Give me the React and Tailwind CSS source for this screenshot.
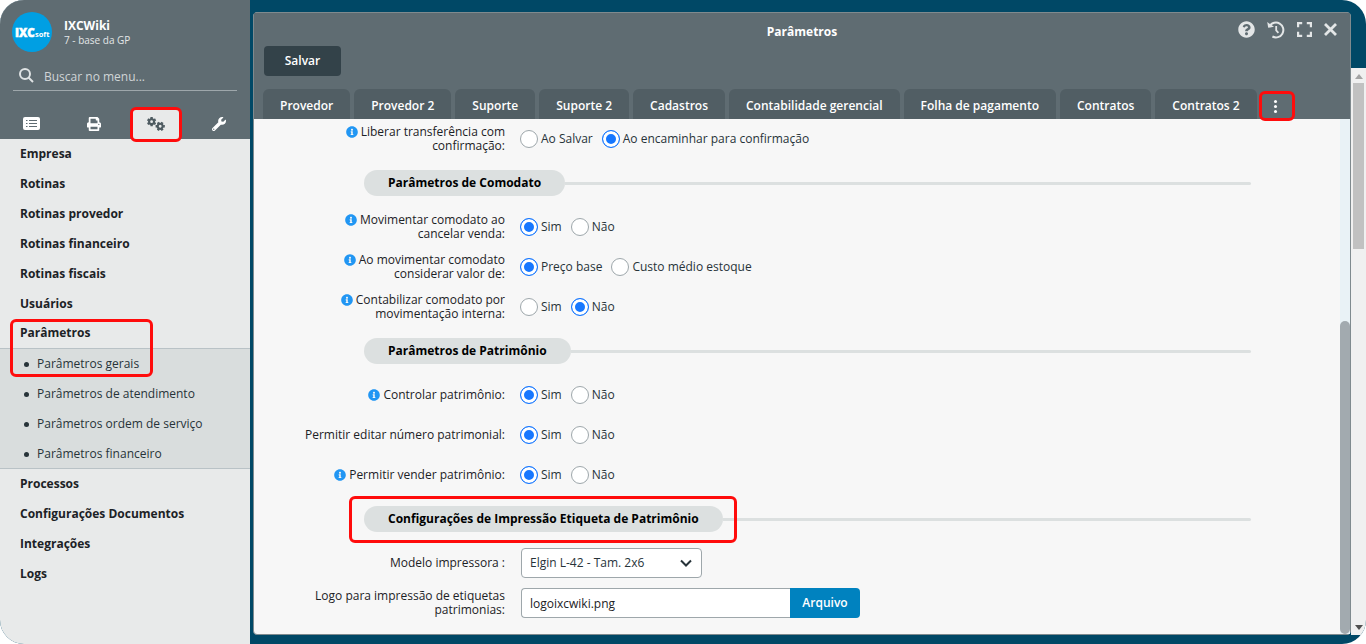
import React, { useState } from 'react';
import { FaPrint, FaWrench, FaQuestionCircle, FaInfoCircle } from 'react-icons/fa';

const menu = [
  { name: 'Empresa' },
  { name: 'Rotinas' },
  { name: 'Rotinas provedor' },
  { name: 'Rotinas financeiro' },
  { name: 'Rotinas fiscais' },
  { name: 'Usuários' },
  {
    name: 'Parâmetros',
    children: [
      'Parâmetros gerais',
      'Parâmetros de atendimento',
      'Parâmetros ordem de serviço',
      'Parâmetros financeiro',
    ],
  },
  { name: 'Processos' },
  { name: 'Configurações Documentos' },
  { name: 'Integrações' },
  { name: 'Logs' },
];

const tabs = [
  'Provedor',
  'Provedor 2',
  'Suporte',
  'Suporte 2',
  'Cadastros',
  'Contabilidade gerencial',
  'Folha de pagamento',
  'Contratos',
  'Contratos 2',
];

const ListIcon = () => (
  <svg viewBox="0 0 17 13" className="w-[17px] h-[13px]">
    <rect width="17" height="13" rx="2" fill="#fff" />
    <path d="M3 3.5h1.5M6 3.5h8M3 6.5h1.5M6 6.5h8M3 9.5h1.5M6 9.5h8" stroke="#5f6c72" strokeWidth="1.2" />
  </svg>
);

const Gear = ({ x, y, turn }) => (
  <g transform={`translate(${x} ${y}) rotate(${turn})`} fill="none" stroke="#4d5a60">
    <circle r="2.5" strokeWidth="2.2" />
    <path
      d="M0 -3V-4.6M2.6 -1.5L4 -2.3M2.6 1.5L4 2.3M0 3V4.6M-2.6 1.5L-4 2.3M-2.6 -1.5L-4 -2.3"
      strokeWidth="2.4"
    />
  </g>
);

const GearsIcon = () => (
  <svg viewBox="0 0 18 14" className="w-[18px] h-[14px]">
    <Gear x={4.6} y={4.7} turn={0} />
    <Gear x={13.2} y={9.3} turn={30} />
  </svg>
);

const HistoryIcon = () => (
  <svg viewBox="0 0 18 18" className="w-[18px] h-[18px]" fill="none" stroke="currentColor" strokeWidth="2">
    <path d="M2.6 5.2A7.4 7.4 0 1 1 5.4 15.5" />
    <path d="M9.2 5V9.4L11.4 11.8" strokeWidth="1.8" />
    <path d="M0.2 1L1.2 6.8L7 5.8Z" fill="currentColor" stroke="none" />
  </svg>
);

const ExpandIcon = () => (
  <svg viewBox="0 0 15 15" className="w-[15px] h-[15px]" fill="none" stroke="currentColor" strokeWidth="2.2">
    <path d="M1.1 5.2V1.1H5.2M9.8 1.1H13.9V5.2M13.9 9.8V13.9H9.8M5.2 13.9H1.1V9.8" />
  </svg>
);

const CloseIcon = () => (
  <svg viewBox="0 0 13 13" className="w-[13px] h-[13px]" fill="none" stroke="currentColor" strokeWidth="2.8">
    <path d="M1 1L12 12M12 1L1 12" />
  </svg>
);

const Sidebar = () => (
  <aside className="w-[250px] shrink-0 flex flex-col bg-[#e8eaea]">
    <div className="bg-[#5f6c72] flex flex-col">
      <div className="flex items-center gap-3 px-3 pt-3">
        <svg viewBox="0 0 40 40" className="w-10 h-10">
          <circle cx="20" cy="20" r="20" fill="#009fe3" />
          <text x="3" y="25" fontFamily="Open Sans" fontSize="11.5" fontWeight="800" fill="#fff" stroke="#fff" strokeWidth="0.5">IXC</text>
          <text x="23" y="25" fontFamily="Open Sans" fontSize="7.5" fontWeight="700" fill="#fff">soft</text>
        </svg>
        <div className="pt-[2px]">
          <p className="text-[12px] leading-[14px] font-bold text-white">IXCWiki</p>
          <p className="text-[10px] leading-[14px] text-[#e3e6e7]">7 - base da GP</p>
        </div>
      </div>
      <label className="mx-[13px] mt-2 h-[31px] flex items-center gap-[10px] border-b border-[#9ea7ab] pl-[6px]">
        <svg viewBox="0 0 15 15" className="w-[15px] h-[15px]" fill="none" stroke="#dfe3e4" strokeWidth="2">
          <circle cx="6" cy="6" r="5" />
          <path d="M9.5 9.5L14 14" />
        </svg>
        <input
          type="text"
          aria-label="Buscar no menu"
          placeholder="Buscar no menu..."
          className="min-w-0 flex-1 pt-1 bg-transparent text-[12px] outline-none placeholder:text-[#d0d5d7]"
        />
      </label>
      <div className="mt-[17px] grid grid-cols-4 h-[31px] text-white">
        <button aria-label="Cadastros" className="flex items-center justify-center"><ListIcon /></button>
        <button aria-label="Relatórios" className="flex items-center justify-center"><FaPrint size={14} /></button>
        <button aria-label="Sistema" className="relative flex items-center justify-center">
          <span className="absolute -top-px left-1/2 -translate-x-1/2 w-[52px] h-[35px] rounded-md border-3 border-[#ff0c0c] bg-[#e8eaea]" />
          <span className="relative"><GearsIcon /></span>
        </button>
        <button aria-label="Ferramentas" className="flex items-center justify-center"><FaWrench size={14} /></button>
      </div>
    </div>

    <nav className="text-[12px] text-[#1c2226]">
      {menu.map((item) => (
        <div key={item.name} className={item.children ? 'relative -mt-px' : ''}>
          <a href="#" className="flex items-center h-[30px] px-5 font-bold">{item.name}</a>
          {item.children && (
            <>
              <ul className="bg-[#d9dddd] border-t border-[#b9c2c6] shadow-[inset_0_-1px_0_#b9c2c6]">
                {item.children.map((child) => (
                  <li key={child}>
                    <a href="#" className="flex items-center h-[30px] pl-6 gap-2 text-[#273339]">
                      <span className="w-[5px] h-[5px] rounded-full bg-[#273339]" />
                      {child}
                    </a>
                  </li>
                ))}
              </ul>
              <span className="absolute left-[10px] top-px w-[143px] h-[58px] rounded-md border-3 border-[#ff0c0c] pointer-events-none" />
            </>
          )}
        </div>
      ))}
    </nav>
  </aside>
);

const Section = ({ title, marked }) => (
  <div className="flex items-center h-12 ml-[110px] mr-[89px]">
    <h2 className="relative h-[26px] flex items-center px-6 rounded-full bg-[#dce0e0] text-[12px] font-bold text-black">
      {title}
      {marked && (
        <span className="absolute -left-[15px] -right-[14px] -top-[10px] -bottom-[11px] rounded-md border-3 border-[#ff0c0c]" />
      )}
    </h2>
    <span className="flex-1 h-[3px] bg-[#dce0e0] rounded-r-sm" />
  </div>
);

const Row = ({ label, info, htmlFor, children }) => {
  const Label = htmlFor ? 'label' : 'span';
  return (
    <div className="flex items-center h-10 pl-[46px]">
      <Label htmlFor={htmlFor} className="w-[205px] shrink-0 text-right leading-[14px]">
        {info && <FaInfoCircle size={12} className="inline-block mr-[3px] align-[-2px] text-[#2196f3]" />}
        {label}
      </Label>
      {children}
    </div>
  );
};

const RadioRow = ({ label, info, name, options, initial }) => {
  const [value, setValue] = useState(initial);
  return (
    <Row label={label} info={info}>
      <div role="radiogroup" aria-label={label} className="ml-[15px] flex gap-[9px]">
        {options.map((option) => (
          <label key={option} className="flex items-center gap-[3px] text-[#273339]">
            <input
              type="radio"
              name={name}
              checked={value === option}
              onChange={() => setValue(option)}
              className="appearance-none w-[18px] h-[18px] rounded-full border border-[#9ea7ab] bg-white checked:border-[#1677ff] checked:bg-[#1677ff] checked:shadow-[inset_0_0_0_3px_white]"
            />
            {option}
          </label>
        ))}
      </div>
    </Row>
  );
};

const App = () => {
  return (
    <div className="min-h-screen bg-white font-['Open_Sans',sans-serif] text-[12px] flex">
      <div className="flex flex-1 min-w-0 bg-[#004866] rounded-3xl overflow-hidden">
        <Sidebar />

        <main className="flex-1 min-w-0 flex flex-col pt-3 pb-[9px] pl-[3px]">
          <div className="flex-1 flex flex-col border border-[#7f8a8e] rounded-sm bg-[#f7f7f7]">
            <header className="bg-[#5f6c72] pl-[9px] pr-[13px] text-white">
              <div className="relative flex items-center justify-end h-[33px]">
                <h1 className="absolute inset-x-0 top-[11px] pl-1 text-center font-bold leading-4 pointer-events-none">Parâmetros</h1>
                <div className="flex items-center gap-3 text-[#e3e6e7]">
                  <button aria-label="Ajuda"><FaQuestionCircle size={17} /></button>
                  <button aria-label="Histórico"><HistoryIcon /></button>
                  <button aria-label="Tela cheia"><ExpandIcon /></button>
                  <button aria-label="Fechar"><CloseIcon /></button>
                </div>
              </div>
              <button className="ml-px w-[77px] h-[30px] rounded bg-[#334249] font-semibold">Salvar</button>
              <div className="mt-[13px] flex items-end gap-1">
                {tabs.map((tab) => (
                  <button key={tab} className="h-[30px] pt-[3px] px-[17px] rounded-t-md bg-[#515e64] font-semibold whitespace-nowrap">{tab}</button>
                ))}
                <button aria-label="Mais abas" className="relative -ml-0.5 w-9 h-[30px]">
                  <span className="absolute inset-x-0 top-[2px] h-[30px] rounded-md border-3 border-[#ff0c0c] flex flex-col items-center justify-center gap-[2px] pt-px pr-[3px]">
                    <span className="w-[3px] h-[3px] rounded-full bg-white" />
                    <span className="w-[3px] h-[3px] rounded-full bg-white" />
                    <span className="w-[3px] h-[3px] rounded-full bg-white" />
                  </span>
                </button>
              </div>
            </header>

            <div className="flex-1 flex">
              <form className="flex-1 pb-[11px] text-[#1c2226]">
                <RadioRow info name="transferencia" label="Liberar transferência com confirmação:" options={['Ao Salvar', 'Ao encaminhar para confirmação']} initial="Ao encaminhar para confirmação" />

                <Section title="Parâmetros de Comodato" />
                <RadioRow info name="movimentar" label="Movimentar comodato ao cancelar venda:" options={['Sim', 'Não']} initial="Sim" />
                <RadioRow info name="valor" label="Ao movimentar comodato considerar valor de:" options={['Preço base', 'Custo médio estoque']} initial="Preço base" />
                <RadioRow info name="contabilizar" label="Contabilizar comodato por movimentação interna:" options={['Sim', 'Não']} initial="Não" />

                <Section title="Parâmetros de Patrimônio" />
                <RadioRow info name="controlar" label="Controlar patrimônio:" options={['Sim', 'Não']} initial="Sim" />
                <RadioRow name="editar" label="Permitir editar número patrimonial:" options={['Sim', 'Não']} initial="Sim" />
                <RadioRow info name="vender" label="Permitir vender patrimônio:" options={['Sim', 'Não']} initial="Sim" />

                <Section title="Configurações de Impressão Etiqueta de Patrimônio" marked />
                <Row label="Modelo impressora :" htmlFor="modelo">
                  <div className="relative ml-4">
                    <select id="modelo" className="appearance-none w-[181px] h-[30px] pl-2 rounded border border-[#9ea7ab] bg-white text-[#273339]">
                      <option>Elgin L-42 - Tam. 2x6</option>
                    </select>
                    <svg viewBox="0 0 12 8" className="absolute right-[10px] top-[11px] w-3 h-2 pointer-events-none" fill="none" stroke="#273339" strokeWidth="2">
                      <path d="M1 1.5L6 6.5L11 1.5" />
                    </svg>
                  </div>
                </Row>
                <Row label="Logo para impressão de etiquetas patrimonias:" htmlFor="logo">
                  <div className="ml-4 flex">
                    <input id="logo" type="text" defaultValue="logoixcwiki.png" className="w-[269px] h-[30px] px-2 rounded-l border border-r-0 border-[#9ea7ab] bg-white" />
                    <button type="button" className="w-[70px] h-[30px] rounded-r bg-[#0082bf] font-semibold text-white">Arquivo</button>
                  </div>
                </Row>
              </form>

              {/* Form scroll track */}
              <div className="w-[10px] flex flex-col bg-[#e9f2f6]">
                <div className="h-[202px]" />
                <div className="flex-1 rounded-full bg-[#a2aaaf]" />
              </div>
            </div>
          </div>
        </main>

        {/* Page scroll track */}
        <div className="w-[15px] mt-[68px] mb-[9px] flex flex-col items-center bg-[#f0f0f0]">
          <svg viewBox="0 0 8 5" className="mt-[6px] w-2 h-[5px]"><path d="M0 5L4 0L8 5Z" fill="#a3a3a3" /></svg>
          <div className="mt-1 w-[11px] h-[166px] bg-[#c1c1c1]" />
          <div className="flex-1" />
          <svg viewBox="0 0 8 5" className="mb-[5px] w-2 h-[5px]"><path d="M0 0L4 5L8 0Z" fill="#505050" /></svg>
        </div>
      </div>
    </div>
  );
};

export default App;
